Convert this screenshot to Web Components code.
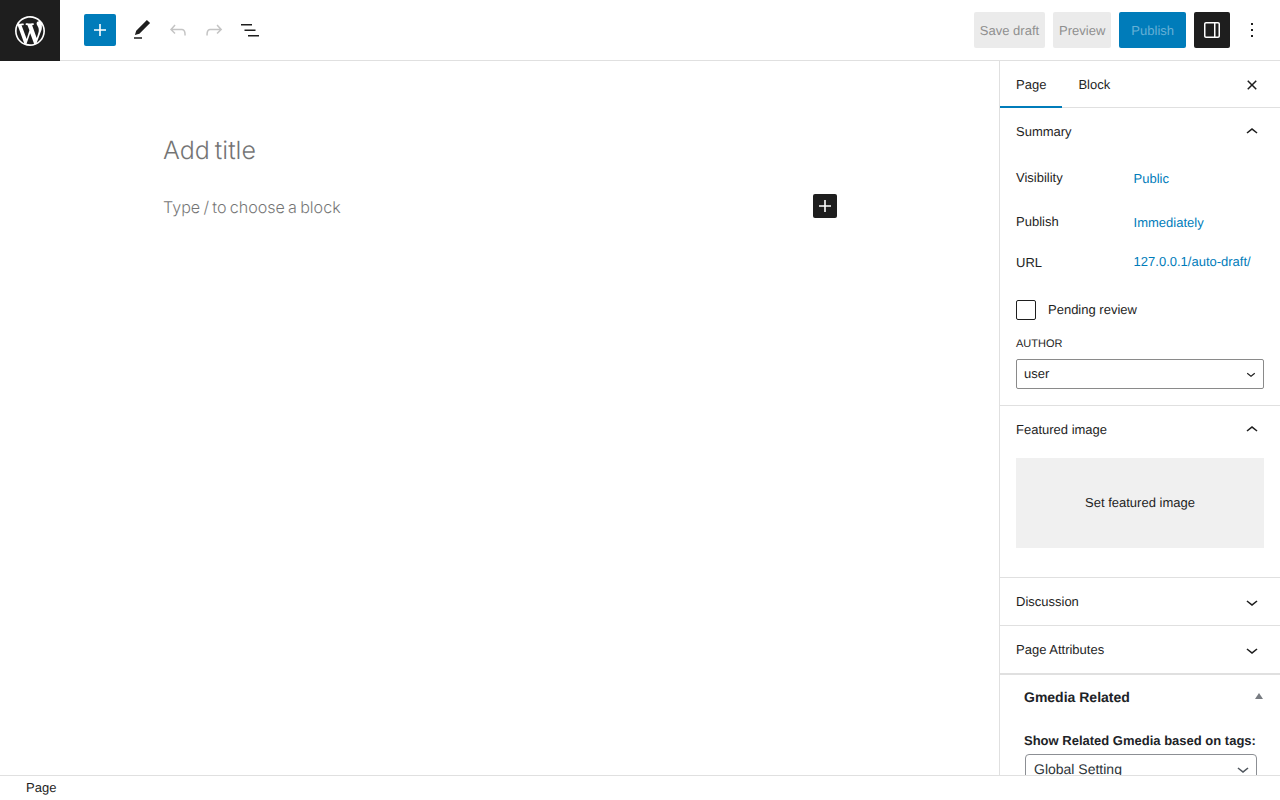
<!DOCTYPE html>
<html lang="en">
<head>
<meta charset="utf-8">
<title>Edit page</title>
<style>
  html, body { margin: 0; height: 100%; overflow: hidden; }
  body { font: 13px/18px "Liberation Sans", Arial, sans-serif; color: #1e1e1e; background: #fff; text-rendering: geometricPrecision; }
</style>
</head>
<body>
<edit-layout>
  <editor-header slot="header"></editor-header>
  <editor-canvas slot="canvas"></editor-canvas>
  <editor-sidebar slot="sidebar">
    <side-panel title="Summary" open>
      <post-row label="Visibility" height="44" top="1">Public</post-row>
      <post-row label="Publish" height="41" top="1">Immediately</post-row>
      <post-row label="URL" height="46" top="-1">127.0.0.1/auto-draft/</post-row>
      <check-row>Pending review</check-row>
      <author-select></author-select>
    </side-panel>
    <side-panel title="Featured image" open>
      <featured-box>Set featured image</featured-box>
    </side-panel>
    <side-panel title="Discussion"></side-panel>
    <side-panel title="Page Attributes"></side-panel>
    <gmedia-box></gmedia-box>
  </editor-sidebar>
  <editor-footer slot="footer">Page</editor-footer>
</edit-layout>

<script>
const PATHS = {
  plus: 'M18 11.2h-5.2V6h-1.6v5.2H6v1.6h5.2V18h1.6v-5.2H18z',
  edit: 'M20.1 5.1L16.9 2 6.2 12.7l-1.3 4.4 4.5-1.3L20.1 5.1zM4 20.8h8v-1.5H4v1.5z',
  undo: 'M18.3 11.7c-.6-.6-1.4-.9-2.3-.9H6.7l2.9-3.3-1.1-1-4.5 5L8.5 16l1-1-2.7-2.7H16c.5 0 .9.2 1.3.5 1 1 1 3.4 1 4.5v.3h1.5v-.2c0-1.5 0-4.3-1.5-5.7z',
  redo: 'M15.6 6.5l-1.1 1 2.9 3.3H8c-.9 0-1.7.3-2.3.9-1.4 1.5-1.4 4.2-1.4 5.6v.2h1.5v-.3c0-1.1 0-3.5 1-4.5.3-.3.7-.5 1.3-.5h9.2L14.5 15l1.1 1.1 4.6-4.6-4.6-5z',
  list: 'M3 6h11v1.5H3V6Zm3.5 5.5h11V13h-11v-1.5ZM21 17H10v1.5h11V17Z',
  drawer: 'M18 4H6c-1.1 0-2 .9-2 2v12c0 1.1.9 2 2 2h12c1.1 0 2-.9 2-2V6c0-1.1-.9-2-2-2zm-4 14.5H6c-.3 0-.5-.2-.5-.5V6c0-.3.2-.5.5-.5h8v13zm4.5-.5c0 .3-.2.5-.5.5h-2.5v-13H18c.3 0 .5.2.5.5v12z',
  more: 'M13 19h-2v-2h2v2zm0-6h-2v-2h2v2zm0-6h-2V5h2v2z',
  close: 'M12 13.06l3.712 3.713 1.061-1.06L13.061 12l3.712-3.712-1.06-1.06L12 10.938 8.288 7.227l-1.061 1.06L10.939 12l-3.712 3.712 1.06 1.061L12 13.061z',
  up: 'M6.5 12.4L12 8l5.5 4.4-.9 1.2L12 10l-4.5 3.6-1-1.2z',
  down: 'M17.5 11.6L12 16l-5.5-4.4.9-1.2L12 14l4.5-3.6 1 1.2z'
};

function icon(name, size = 24, fill = 'currentColor') {
  return `<svg xmlns="http://www.w3.org/2000/svg" viewBox="0 0 24 24" width="${size}" height="${size}" fill="${fill}" style="display:block"><path d="${PATHS[name]}"/></svg>`;
}

const WP_LOGO = 'M20 10c0-5.51-4.49-10-10-10C4.48 0 0 4.49 0 10c0 5.52 4.48 10 10 10 5.51 0 10-4.48 10-10zM7.78 15.37L4.37 6.22c.55-.02 1.17-.08 1.17-.08.5-.06.44-1.13-.06-1.11 0 0-1.45.11-2.37.11-.18 0-.37 0-.58-.01C4.12 2.69 6.87 1.11 10 1.11c2.33 0 4.45.87 6.05 2.34-.68-.11-1.65.39-1.65 1.58 0 .74.45 1.36.9 2.1.35.61.55 1.36.55 2.46 0 1.49-1.4 5-1.4 5l-3.03-8.37c.54-.02.82-.17.82-.17.5-.05.44-1.25-.06-1.22 0 0-1.44.12-2.38.12-.87 0-2.33-.12-2.33-.12-.5-.03-.56 1.2-.06 1.22l.92.08 1.26 3.41zM17.41 10c.24-.64.74-1.87.43-4.25.7 1.29 1.05 2.71 1.05 4.25 0 3.29-1.73 6.24-4.4 7.78.97-2.59 1.94-5.2 2.92-7.78zM6.1 18.09C3.12 16.65 1.11 13.53 1.11 10c0-1.3.23-2.48.72-3.59C3.25 10.3 4.67 14.2 6.1 18.09zm4.03-6.63l2.58 6.98c-.86.29-1.76.45-2.71.45-.79 0-1.57-.11-2.29-.33.81-2.38 1.62-4.74 2.42-7.1z';

class ShadowBase extends HTMLElement {
  constructor() {
    super();
    this.attachShadow({ mode: 'open' });
  }
  connectedCallback() {
    this.shadowRoot.innerHTML = this.markup();
  }
}

class EditLayout extends ShadowBase {
  markup() {
    return `
      <style>
        :host { display: grid; grid-template: 61px minmax(0, 1fr) 25px / minmax(0, 1fr) 281px; height: 100vh; overflow: hidden; opacity: .999; }
        .header, .footer { grid-column: 1 / -1; }
        .canvas, .sidebar { min-height: 0; overflow: hidden; }
      </style>
      <div class="header"><slot name="header"></slot></div>
      <div class="canvas"><slot name="canvas"></slot></div>
      <div class="sidebar"><slot name="sidebar"></slot></div>
      <div class="footer"><slot name="footer"></slot></div>
    `;
  }
}

class EditorHeader extends ShadowBase {
  markup() {
    return `
      <style>
        :host { display: flex; align-items: flex-start; height: 61px; background: #fff; }
        .logo { width: 60px; height: 61px; background: #1e1e1e; color: #fff; display: flex; align-items: center; justify-content: center; flex: none; }
        .bar { flex: 1; height: 60px; border-bottom: 1px solid #e0e0e0; display: flex; align-items: center; justify-content: space-between; padding: 0 10px 0 24px; }
        .group { display: flex; align-items: center; }
        .inserter { width: 32px; height: 32px; background: #007cba; color: #fff; border-radius: 2px; display: flex; align-items: center; justify-content: center; margin-right: 8px; }
        .tool { width: 36px; height: 36px; display: flex; align-items: center; justify-content: center; color: #1e1e1e; }
        .tool.off { color: #c4c4c4; }
        .btn { height: 36px; box-sizing: border-box; border-radius: 2px; padding: 1px 6px 0; display: flex; align-items: center; background: #ebebeb; color: #8f8f8f; margin-right: 8px; white-space: nowrap; }
        .btn.primary { background: #007cba; color: #66b0d6; padding: 1px 12px 0; }
        .toggle { background: #1e1e1e; color: #fff; border-radius: 2px; margin-right: 4px; }
      </style>
      <div class="logo"><svg xmlns="http://www.w3.org/2000/svg" viewBox="-2 -2 24 24" width="36" height="36" fill="currentColor" style="display:block"><path d="${WP_LOGO}"/></svg></div>
      <div class="bar">
        <div class="group">
          <div class="inserter">${icon('plus')}</div>
          <div class="tool">${icon('edit')}</div>
          <div class="tool off">${icon('undo')}</div>
          <div class="tool off">${icon('redo')}</div>
          <div class="tool">${icon('list')}</div>
        </div>
        <div class="group">
          <div class="btn">Save draft</div>
          <div class="btn">Preview</div>
          <div class="btn primary">Publish</div>
          <div class="tool toggle">${icon('drawer')}</div>
          <div class="tool">${icon('more')}</div>
        </div>
      </div>
    `;
  }
}

class EditorCanvas extends ShadowBase {
  markup() {
    return `
      <style>
        :host { display: block; height: 100%; background: #fff; font-family: Inter, "Liberation Sans", sans-serif; color: #1e1e1e; }
        .wrap { width: 674px; margin-left: 163px; padding-top: 71px; }
        h1 { margin: 0; font-size: 25px; line-height: 38px; font-weight: 300; height: 36px; word-spacing: -2px; opacity: .62; }
        .para { margin-top: 26px; display: flex; align-items: center; justify-content: space-between; height: 24px; }
        .para span { font-size: 16.1px; font-weight: 300; word-spacing: -1.3px; opacity: .62; margin-top: 2px; }
        .add { width: 24px; height: 24px; background: #1e1e1e; color: #fff; border-radius: 2px; flex: none; }
      </style>
      <div class="wrap">
        <h1>Add title</h1>
        <div class="para"><span>Type / to choose a block</span><div class="add">${icon('plus')}</div></div>
      </div>
    `;
  }
}

class EditorSidebar extends ShadowBase {
  markup() {
    return `
      <style>
        :host { display: block; height: 100%; box-sizing: border-box; border-left: 1px solid #e0e0e0; background: #fff; overflow: hidden; }
        .tabs { display: flex; align-items: stretch; height: 46px; border-bottom: 1px solid #e0e0e0; }
        .tab { padding: 0 16px; display: flex; align-items: center; height: 47px; box-sizing: border-box; }
        .tab.on { box-shadow: inset 0 -2px 0 #007cba; }
        .close { margin-left: auto; width: 36px; height: 47px; display: flex; align-items: center; justify-content: center; margin-right: 10px; }
      </style>
      <div class="tabs">
        <div class="tab on">Page</div>
        <div class="tab">Block</div>
        <div class="close">${icon('close', 24)}</div>
      </div>
      <slot></slot>
    `;
  }
}

class SidePanel extends ShadowBase {
  markup() {
    const open = this.hasAttribute('open');
    return `
      <style>
        :host { display: block; border-bottom: 1px solid #e0e0e0; }
        .head { height: 47px; display: flex; align-items: center; justify-content: space-between; padding: 0 16px; }
        .body { padding: 0 16px 16px; }
      </style>
      <div class="head"><span>${this.getAttribute('title')}</span><span>${icon(open ? 'up' : 'down')}</span></div>
      ${open ? '<div class="body"><slot></slot></div>' : ''}
    `;
  }
}

class PostRow extends ShadowBase {
  markup() {
    const top = Number(this.getAttribute('top') || 0);
    return `
      <style>
        :host { display: grid; grid-template-columns: 117.6px 1fr; height: ${this.getAttribute('height')}px; align-items: start; }
        :host(:first-child) { margin-top: 14px; }
        .value { color: #007cba; margin-top: ${top}px; }
      </style>
      <div>${this.getAttribute('label')}</div>
      <div class="value"><slot></slot></div>
    `;
  }
}

class CheckRow extends ShadowBase {
  markup() {
    return `
      <style>
        :host { display: flex; align-items: center; gap: 12px; height: 20px; }
        .box { width: 20px; height: 20px; box-sizing: border-box; border: 1px solid #1e1e1e; border-radius: 2px; }
      </style>
      <div class="box"></div><slot></slot>
    `;
  }
}

class AuthorSelect extends ShadowBase {
  markup() {
    return `
      <style>
        :host { display: block; margin-top: 14px; }
        .label { font-size: 11px; line-height: 20px; text-transform: uppercase; margin-bottom: 5px; }
        .box { height: 30px; box-sizing: border-box; border: 1px solid #8a8a8a; border-radius: 2px; display: flex; align-items: center; justify-content: space-between; padding: 0 3px 0 7px; }
      </style>
      <div class="label">Author</div>
      <div class="box"><span>user</span>${icon('down', 18)}</div>
    `;
  }
}

class FeaturedBox extends ShadowBase {
  markup() {
    return `
      <style>
        :host { display: flex; align-items: center; justify-content: center; height: 90px; margin: 5px 0 13px; background: #f0f0f0; }
      </style>
      <slot></slot>
    `;
  }
}

class GmediaBox extends ShadowBase {
  markup() {
    return `
      <style>
        :host { display: block; border-top: 1px solid #e0e0e0; color: #1d2327; }
        .head { height: 44px; display: flex; align-items: center; justify-content: space-between; padding: 0 17px 0 24px; font-size: 14px; font-weight: 700; }
        .arrow { width: 0; height: 0; border: 4px solid transparent; border-top: 0; border-bottom: 6px solid #787c82; margin-top: -3px; }
        .inner { padding: 13px 23px 0 24px; }
        .label { font-weight: 700; margin-bottom: 4px; }
        .select { margin-left: 1px; height: 40px; box-sizing: border-box; border: 1px solid #8c8f94; border-radius: 4px; display: flex; justify-content: space-between; padding: 5px 1px 0 8px; font-size: 14px; color: #2c3338; line-height: 18px; }
        .select svg { margin-top: -3px; }
      </style>
      <div class="head"><span>Gmedia Related</span><span class="arrow"></span></div>
      <div class="inner">
        <div class="label">Show Related Gmedia based on tags:</div>
        <div class="select"><span>Global Setting</span>${icon('down', 24, '#50575e')}</div>
      </div>
    `;
  }
}

class EditorFooter extends ShadowBase {
  markup() {
    return `
      <style>
        :host { display: flex; align-items: center; height: 25px; box-sizing: border-box; border-top: 1px solid #e0e0e0; background: #fff; padding-left: 26px; position: relative; z-index: 1; }
      </style>
      <slot></slot>
    `;
  }
}

customElements.define('edit-layout', EditLayout);
customElements.define('editor-header', EditorHeader);
customElements.define('editor-canvas', EditorCanvas);
customElements.define('editor-sidebar', EditorSidebar);
customElements.define('side-panel', SidePanel);
customElements.define('post-row', PostRow);
customElements.define('check-row', CheckRow);
customElements.define('author-select', AuthorSelect);
customElements.define('featured-box', FeaturedBox);
customElements.define('gmedia-box', GmediaBox);
customElements.define('editor-footer', EditorFooter);
</script>
</body>
</html>
